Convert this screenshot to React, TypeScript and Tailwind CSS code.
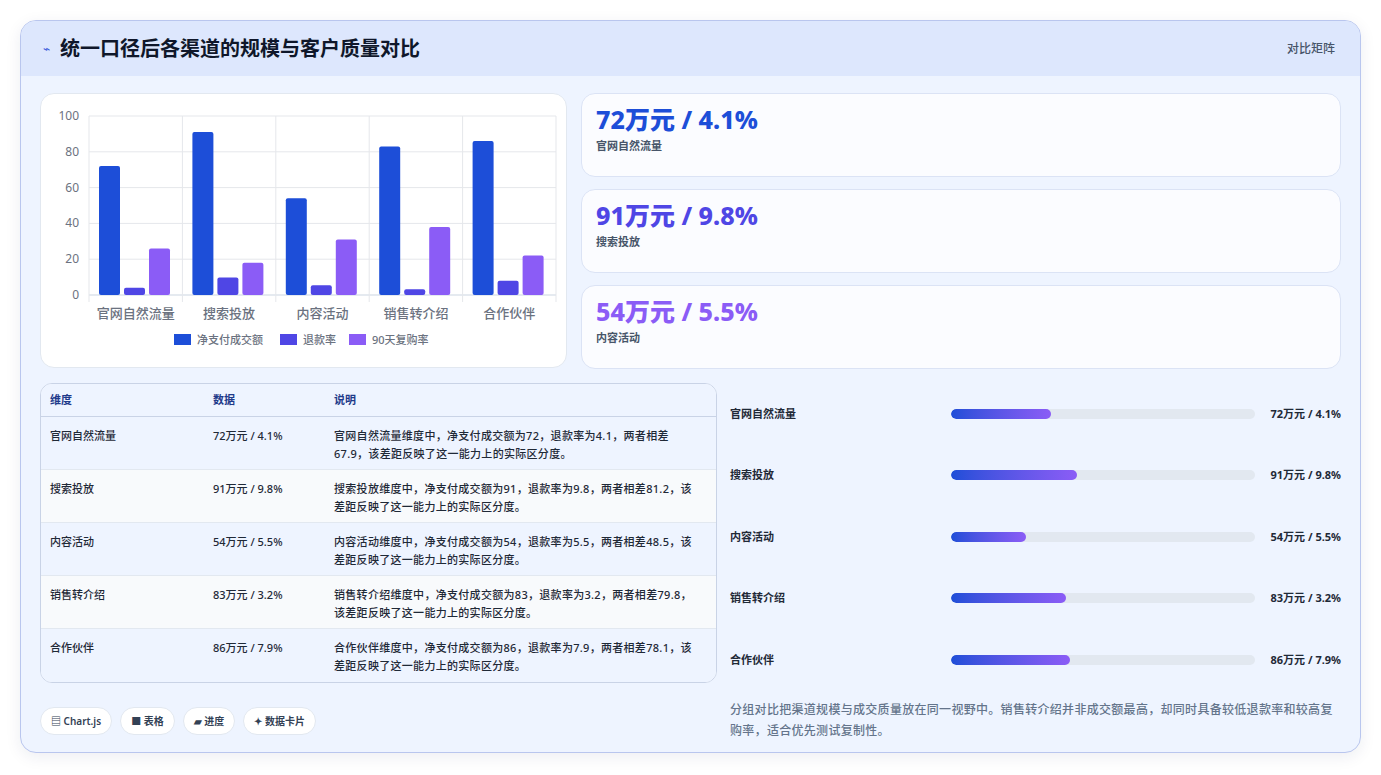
import React from "react";

const rows = [
  { n: "官网自然流量", a: 72, r: 4.1, p: 26, d: "官网自然流量维度中，净支付成交额为72，退款率为4.1，两者相差67.9，该差距反映了这一能力上的实际区分度。" },
  { n: "搜索投放", a: 91, r: 9.8, p: 18, d: "搜索投放维度中，净支付成交额为91，退款率为9.8，两者相差81.2，该差距反映了这一能力上的实际区分度。" },
  { n: "内容活动", a: 54, r: 5.5, p: 31, d: "内容活动维度中，净支付成交额为54，退款率为5.5，两者相差48.5，该差距反映了这一能力上的实际区分度。" },
  { n: "销售转介绍", a: 83, r: 3.2, p: 38, d: "销售转介绍维度中，净支付成交额为83，退款率为3.2，两者相差79.8，该差距反映了这一能力上的实际区分度。" },
  { n: "合作伙伴", a: 86, r: 7.9, p: 22, d: "合作伙伴维度中，净支付成交额为86，退款率为7.9，两者相差78.1，该差距反映了这一能力上的实际区分度。" },
];

const font = { fontFamily: '"Noto Sans", "Noto Sans CJK SC", sans-serif' };

function Chart() {
  const x0 = 48, w = 467, y0 = 22, h = 179;
  const cw = w / 5;
  const y = (v: number) => y0 + h - (v / 100) * h;
  return (
    <svg width="527" height="275" viewBox="0 0 527 275" style={font}>
      {[0, 20, 40, 60, 80, 100].map((t) => (
        <g key={t}>
          <line x1={x0} x2={x0 + w} y1={y(t)} y2={y(t)} stroke={t === 0 ? "#cbd5e1" : "#e5e7eb"} />
          <text x={x0 - 10} y={y(t) + 4} textAnchor="end" fontSize="12" fill="#6b7280">{t}</text>
        </g>
      ))}
      {[0, 1, 2, 3, 4, 5].map((i) => (
        <line key={i} x1={x0 + i * cw} x2={x0 + i * cw} y1={y0} y2={y0 + h + 7} stroke="#e5e7eb" />
      ))}
      {rows.map((r, i) => {
        const bx = x0 + i * cw + 10;
        const vals: [number, string][] = [[r.a, "#1d4ed8"], [r.r, "#4f46e5"], [r.p, "#8b5cf6"]];
        return (
          <g key={i}>
            {vals.map(([v, c], j) => (
              <rect key={j} x={bx + j * 25} y={y(v)} width={21} height={y(0) - y(v)} rx={2} fill={c} />
            ))}
            <text x={x0 + i * cw + cw / 2} y={y0 + h + 23} textAnchor="middle" fontSize="13" fontWeight="500" fill="#6b7280">{r.n}</text>
          </g>
        );
      })}
      {[["净支付成交额", "#1d4ed8", 133], ["退款率", "#4f46e5", 239], ["90天复购率", "#8b5cf6", 308]].map(([t, c, x]) => (
        <g key={t as string}>
          <rect x={x as number} y={240} width={17} height={11} fill={c as string} />
          <text x={(x as number) + 23} y={250} fontSize="11" fontWeight="500" fill="#6b7280">{t}</text>
        </g>
      ))}
    </svg>
  );
}

export default function App() {
  const stats = [
    { i: 0, c: "text-[#1d4ed8]" },
    { i: 1, c: "text-[#4f46e5]" },
    { i: 2, c: "text-[#8b5cf6]" },
  ];
  return (
    <div className="w-[1381px] h-[775px] bg-white p-[20px]" style={font}>
      <div className="w-[1341px] h-[733px] rounded-[16px] border border-[#b9c6ee] bg-[#eef4ff] overflow-hidden shadow-[0_4px_16px_rgba(30,41,90,0.08)]">
        <div className="h-[55px] bg-[#dde7fd] flex items-center justify-between pl-[22px] pr-[25px]">
          <div className="flex items-center gap-[10px]">
            <span className="text-[#3b5bdb] text-[12px]">⌁</span>
            <span className="text-[20px] font-bold text-[#0f172a]">统一口径后各渠道的规模与客户质量对比</span>
          </div>
          <span className="text-[12px] font-medium text-[#475569]">对比矩阵</span>
        </div>
        <div className="px-[19px] pt-[17px] flex gap-[14px]">
          <div className="w-[527px] h-[275px] bg-white rounded-[14px] border border-[#e2e8f0]">
            <Chart />
          </div>
          <div className="flex-1 flex flex-col gap-[12px]">
            {stats.map(({ i, c }) => (
              <div key={i} className="h-[84px] bg-[#fbfcff] rounded-[14px] border border-[#dbe3f5] px-[14px] pt-[9px]">
                <div className={`text-[25px] font-extrabold leading-[32px] ${c}`}>{rows[i].a}万元 / {rows[i].r}%</div>
                <div className="text-[11px] font-semibold text-[#475569] mt-[3px]">{rows[i].n}</div>
              </div>
            ))}
          </div>
        </div>
        <div className="px-[19px] pt-[14px] flex gap-[13px]">
          <div className="w-[677px] flex flex-col">
            <div className="rounded-[12px] border border-[#c9d3e6] overflow-hidden bg-white">
              <div className="h-[33px] flex items-center text-[11px] font-bold text-[#1e3a8a] bg-[#eef4ff] border-b border-[#c9d3e6]">
                <div className="w-[172px] pl-[9px]">维度</div>
                <div className="w-[121px]">数据</div>
                <div>说明</div>
              </div>
              {rows.map((r, i) => (
                <div key={i} className={`h-[53px] flex pt-[10px] text-[11px] font-medium text-[#1f2937] leading-[18px] ${i % 2 === 0 ? "bg-[#eef4ff]" : "bg-[#f8fafc]"} ${i < 4 ? "border-b border-[#e2e8f0]" : ""}`}>
                  <div className="w-[172px] pl-[9px]">{r.n}</div>
                  <div className="w-[121px]">{r.a}万元 / {r.r}%</div>
                  <div className="w-[366px] tracking-[0.3px]">{r.d}</div>
                </div>
              ))}
            </div>
            <div className="flex gap-[8px] mt-[24px]">
              {["▤ Chart.js", "■ 表格", "▰ 进度", "✦ 数据卡片"].map((t, i) => (
                <span key={i} className={`h-[28px] px-[10px] flex items-center rounded-full bg-white border border-[#e2e8f0] text-[10px] font-semibold text-[#334155] ${i === 0 ? "font-bold" : ""}`}>{t}</span>
              ))}
            </div>
          </div>
          <div className="flex-1 flex flex-col">
            {rows.map((r, i) => (
              <div key={i} className="h-[61.5px] flex items-center">
                <div className="w-[221px] text-[11px] font-semibold text-[#1f2937]">{r.n}</div>
                <div className="w-[304px] h-[10px] rounded-full bg-[#e2e8f0] overflow-hidden">
                  <div className="h-full rounded-full bg-gradient-to-r from-[#1d4ed8] to-[#8b5cf6]" style={{ width: `${r.a * 0.455}%` }} />
                </div>
                <div className="flex-1 text-right text-[11px] font-bold text-[#1f2937]">{r.a}万元 / {r.r}%</div>
              </div>
            ))}
            <div className="mt-[8px] text-[12px] font-medium tracking-[0.3px] leading-[21px] text-[#64748b]">分组对比把渠道规模与成交质量放在同一视野中。销售转介绍并非成交额最高，却同时具备较低退款率和较高复购率，适合优先测试复制性。</div>
          </div>
        </div>
      </div>
    </div>
  );
}
